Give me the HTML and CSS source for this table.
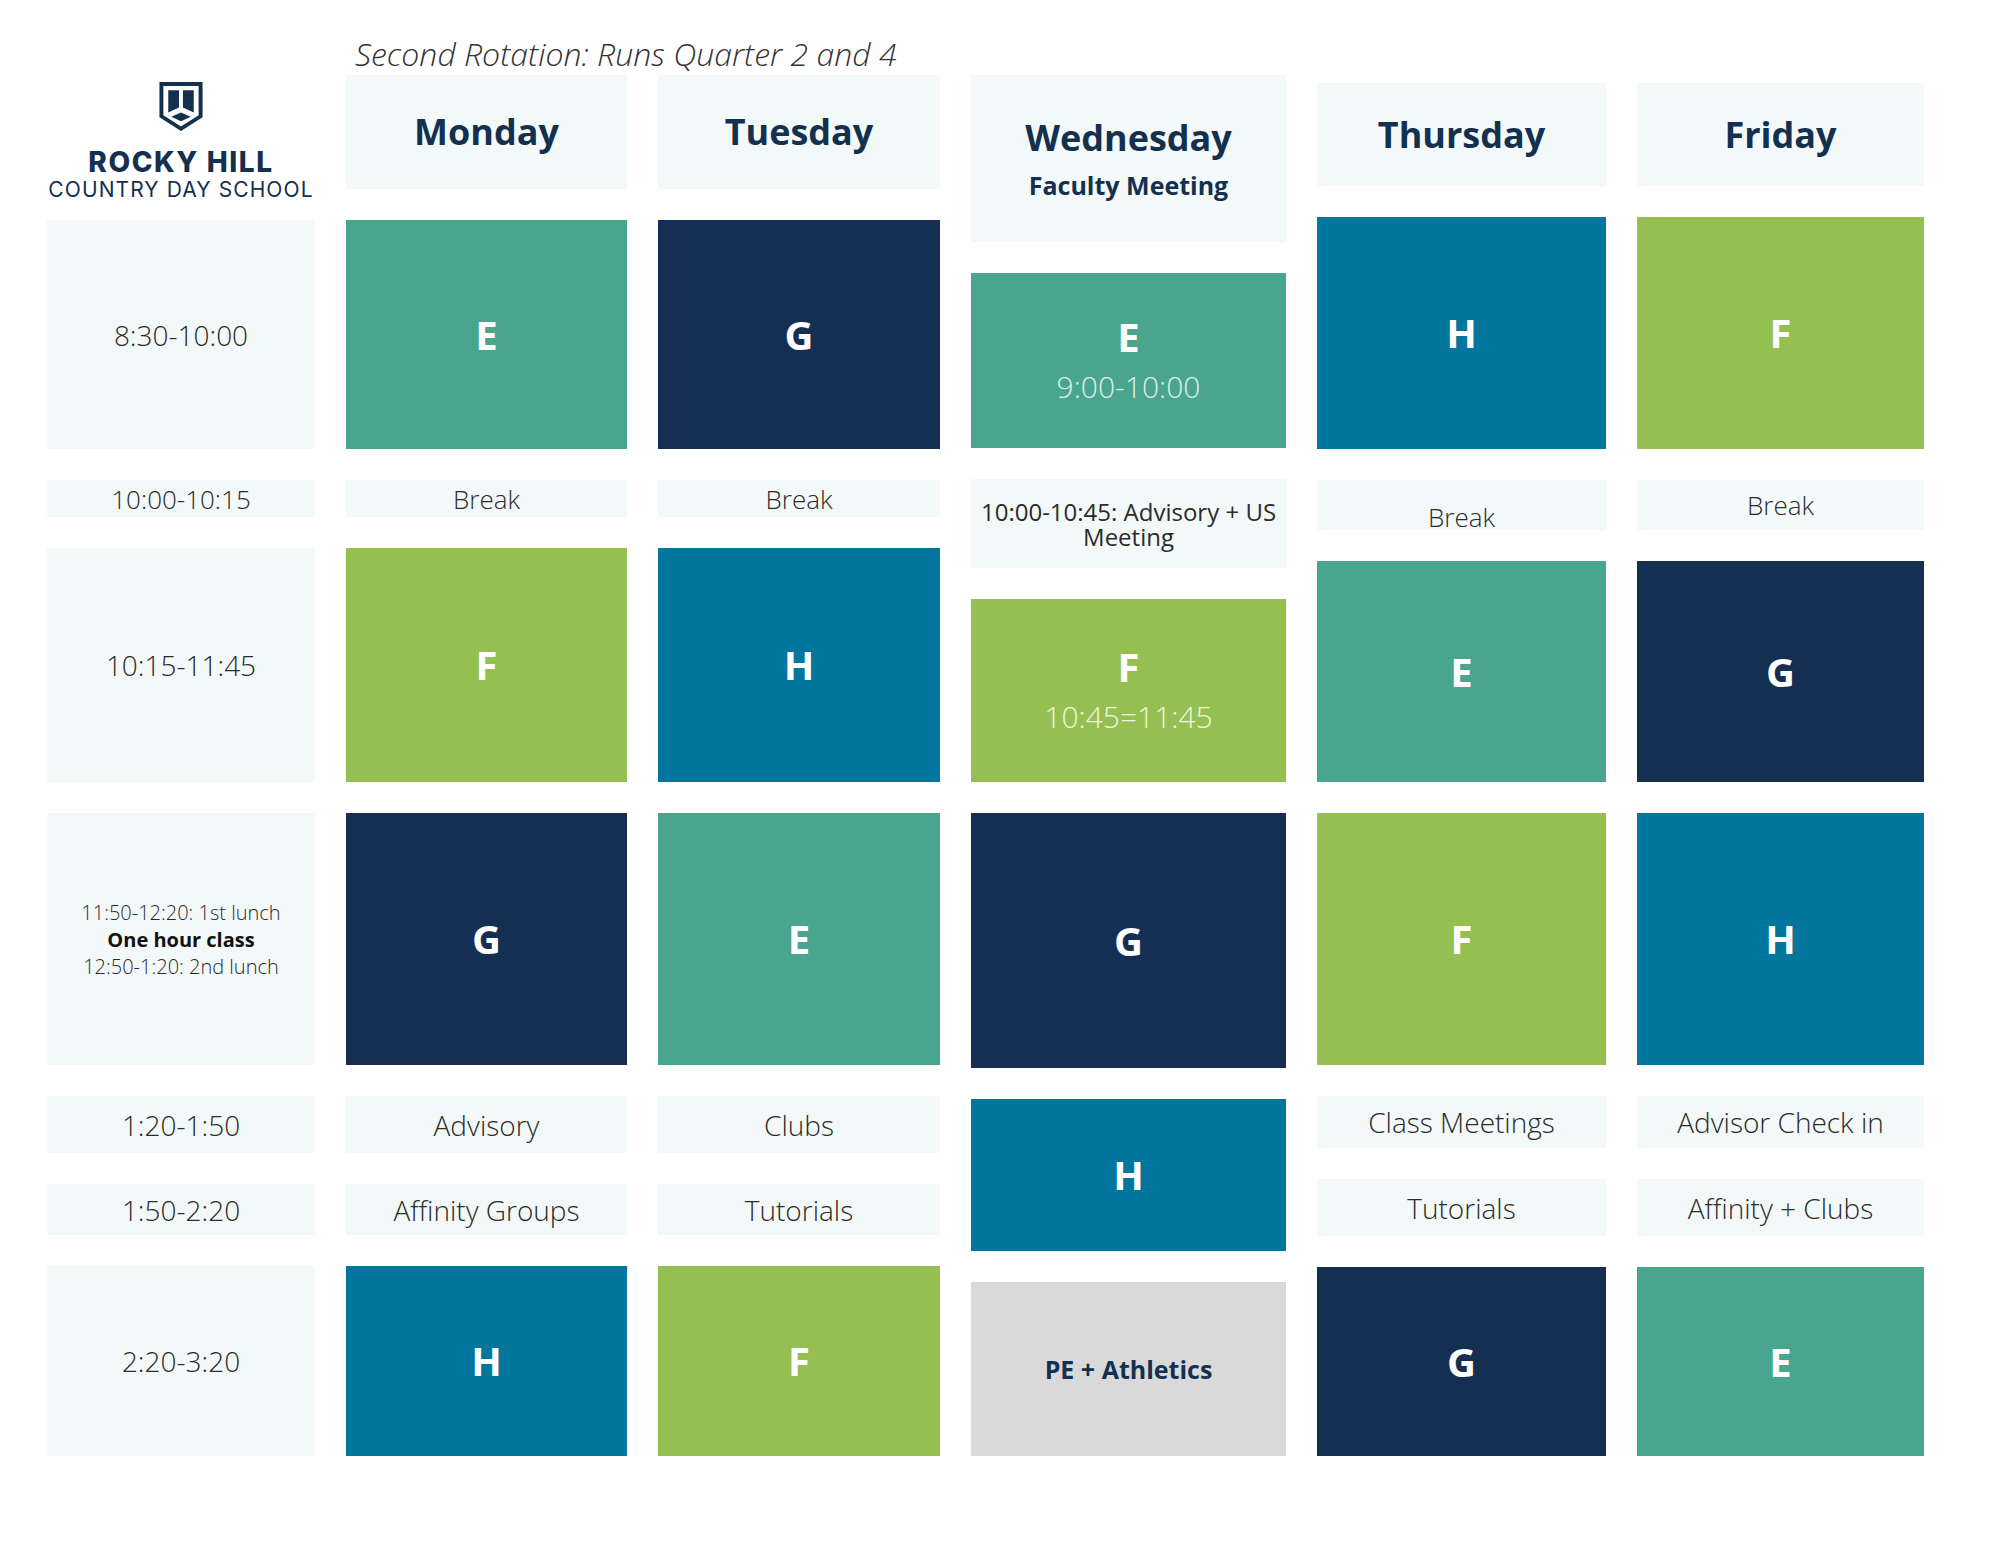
FILE: index.html
```html
<!DOCTYPE html>
<html lang="en">
<head>
<meta charset="utf-8">
<title>Second Rotation Schedule</title>
<link rel="stylesheet" href="styles.css">
</head>
<body>
<div class="page">
  <div class="title">Second Rotation: Runs Quarter 2 and 4</div>
  <div class="grid">
    <div class="col">
      <div class="logo">
        <svg class="shield" viewBox="0 0 44 50" width="44" height="49" aria-hidden="true">
          <path d="M0 0H44V36L22 50L0 36Z" fill="#14304f"/>
          <path d="M4 4H40V34L22 45.5L4 34Z" fill="#fff"/>
          <path d="M9 8.5H20V26L9 31Z" fill="#14304f"/>
          <path d="M24 8.5H35V31L24 26Z" fill="#14304f"/>
          <path d="M12 35.5L22 31L32 35.5L22 40Z" fill="#14304f"/>
        </svg>
        <div class="logo-name">ROCKY HILL</div>
        <div class="logo-sub">COUNTRY DAY SCHOOL</div>
      </div>
      <div class="cell light h-r1">8:30-10:00</div>
      <div class="cell light small h-r2">10:00-10:15</div>
      <div class="cell light h-r3">10:15-11:45</div>
      <div class="cell light lunch h-r4">
        <span>11:50-12:20: 1st lunch</span>
        <span class="strong">One hour class</span>
        <span>12:50-1:20: 2nd lunch</span>
      </div>
      <div class="cell light h-r5">1:20-1:50</div>
      <div class="cell light h-r6">1:50-2:20</div>
      <div class="cell light h-r7">2:20-3:20</div>
    </div>

    <div class="col">
      <div class="cell day h-head">Monday</div>
      <div class="cell block teal h-r1">E</div>
      <div class="cell light small h-r2">Break</div>
      <div class="cell block green h-r3">F</div>
      <div class="cell block navy h-r4">G</div>
      <div class="cell light h-r5">Advisory</div>
      <div class="cell light h-r6">Affinity Groups</div>
      <div class="cell block blue h-r7">H</div>
    </div>

    <div class="col">
      <div class="cell day h-head">Tuesday</div>
      <div class="cell block navy h-r1">G</div>
      <div class="cell light small h-r2">Break</div>
      <div class="cell block blue h-r3">H</div>
      <div class="cell block teal h-r4">E</div>
      <div class="cell light h-r5">Clubs</div>
      <div class="cell light h-r6">Tutorials</div>
      <div class="cell block green h-r7">F</div>
    </div>

    <div class="col">
      <div class="cell day h-w-head">
        <span>Wednesday</span>
        <span class="day-sub">Faculty Meeting</span>
      </div>
      <div class="cell block teal h-w1">
        <span>E</span>
        <span class="block-time">9:00-10:00</span>
      </div>
      <div class="cell light note h-w2">
        <span>10:00-10:45: Advisory + US</span>
        <span>Meeting</span>
      </div>
      <div class="cell block green h-w3">
        <span>F</span>
        <span class="block-time">10:45=11:45</span>
      </div>
      <div class="cell block navy h-w4">G</div>
      <div class="cell block blue h-w5">H</div>
      <div class="cell pe h-w6">PE + Athletics</div>
    </div>

    <div class="col late">
      <div class="cell day h-t-head">Thursday</div>
      <div class="cell block blue h-t1">H</div>
      <div class="cell light small low h-t2">Break</div>
      <div class="cell block teal h-t3">E</div>
      <div class="cell block green h-t4">F</div>
      <div class="cell light h-t5">Class Meetings</div>
      <div class="cell light h-t6">Tutorials</div>
      <div class="cell block navy h-t7">G</div>
    </div>

    <div class="col late">
      <div class="cell day h-t-head">Friday</div>
      <div class="cell block green h-t1">F</div>
      <div class="cell light small h-t2">Break</div>
      <div class="cell block navy h-t3">G</div>
      <div class="cell block blue h-t4">H</div>
      <div class="cell light h-t5">Advisor Check in</div>
      <div class="cell light h-t6">Affinity + Clubs</div>
      <div class="cell block teal h-t7">E</div>
    </div>
  </div>
</div>
</body>
</html>
```

FILE: styles.css
```css
* { box-sizing: border-box; }

html, body {
  margin: 0;
  background: #ffffff;
}

.page {
  padding: 38px 0 0 47px;
  font-family: "Open Sans", "Noto Sans", sans-serif;
  color: #2e2e2e;
}

.title {
  padding-left: 308px;
  margin-bottom: 5px;
  font-size: 32px;
  line-height: 32px;
  font-style: italic;
  font-weight: 300;
  color: #333333;
  white-space: nowrap;
}

.grid {
  display: grid;
  grid-template-columns: 268px 281px 282px 315px 289px 287px;
  column-gap: 31px;
  align-items: start;
}

.col {
  display: flex;
  flex-direction: column;
  gap: 31px;
}

.col.late { margin-top: 8px; }

/* logo */
.logo {
  height: 114px;
  display: flex;
  flex-direction: column;
  align-items: center;
  padding-top: 7px;
  color: #14304f;
}

.shield { display: block; flex: none; }

.logo-name {
  margin-top: 18px;
  font-family: "Inter", "DejaVu Sans", sans-serif;
  font-weight: 800;
  font-size: 28px;
  line-height: 27px;
  letter-spacing: 1.6px;
  white-space: nowrap;
}

.logo-sub {
  margin-top: 1px;
  font-family: "Inter", "DejaVu Sans", sans-serif;
  font-weight: 400;
  font-size: 21px;
  line-height: 26px;
  letter-spacing: 1.1px;
  white-space: nowrap;
}

/* cells */
.cell {
  display: flex;
  flex-direction: column;
  align-items: center;
  justify-content: center;
  text-align: center;
  flex: none;
}

.light {
  background: #f3f9f8;
  color: #2b2b2b;
  font-weight: 300;
  font-size: 28px;
  line-height: 32px;
}

.light.small { font-size: 26px; }

.light.low {
  justify-content: flex-start;
  padding-top: 21px;
}

.note {
  font-weight: 400;
  font-size: 24px;
  line-height: 25px;
  white-space: nowrap;
}

.lunch {
  font-size: 20px;
  line-height: 27px;
}

.lunch .strong {
  font-weight: 700;
  color: #111111;
}

.day {
  background: #f3f9f8;
  color: #14304f;
  font-weight: 700;
  font-size: 36px;
  line-height: 40px;
}

.day-sub {
  margin-top: 12px;
  font-size: 25px;
  line-height: 30px;
}

.block {
  color: #ffffff;
  font-weight: 700;
  font-size: 40px;
  line-height: 40px;
}

.block-time {
  margin-top: 12px;
  font-size: 30px;
  line-height: 36px;
  font-weight: 300;
}

.teal { background: #4aa58f; }
.teal .block-time { color: #dcefe9; }
.navy { background: #142f52; }
.blue { background: #02769c; }
.green { background: #95bf50; }
.green .block-time { color: #eef6e2; }

.pe {
  background: #d9d9d9;
  color: #14304f;
  font-weight: 700;
  font-size: 25px;
  line-height: 30px;
}

/* heights: Monday / Tuesday / time column */
.h-head { height: 114px; }
.h-r1 { height: 229px; }
.h-r2 { height: 37px; }
.h-r3 { height: 234px; }
.h-r4 { height: 252px; }
.h-r5 { height: 57px; }
.h-r6 { height: 51px; }
.h-r7 { height: 190px; }

/* Wednesday */
.h-w-head { height: 167px; }
.h-w1 { height: 175px; }
.h-w2 { height: 89px; }
.h-w3 { height: 183px; }
.h-w4 { height: 255px; }
.h-w5 { height: 152px; }
.h-w6 { height: 174px; }

/* Thursday / Friday */
.h-t-head { height: 103px; }
.h-t1 { height: 232px; }
.h-t2 { height: 50px; }
.h-t3 { height: 221px; }
.h-t4 { height: 252px; }
.h-t5 { height: 52px; }
.h-t6 { height: 57px; }
.h-t7 { height: 189px; }
```
